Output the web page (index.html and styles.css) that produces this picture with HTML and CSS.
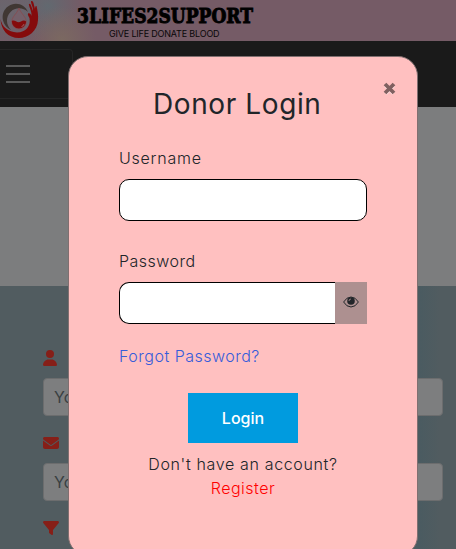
FILE: index.html
```html
<!DOCTYPE html>
<html lang="en">
<head>
<meta charset="utf-8">
<title>Donor Login</title>
<link rel="stylesheet" href="styles.css">
</head>
<body>
<div class="page">
  <header class="banner">
    <svg class="logo" width="40" height="41" viewBox="0 0 40 41">
      <path d="M11 30C1 25 0 12 8 6.500C15 1 25 4 28 12C23 7 15 7 10.500 12C5.500 17 6 25 11 30Z" fill="#403733"/>
      <path d="M.5 19C2 27 8 32 17 32.500C26 32.500 31 26 29.500 18C28.500 16 27.500 15 28 13.500C29.500 12.500 31 14 31.500 16C32 12 29.500 8 28.800 4.500C29.500 3 30.500 4 31 5.500L33 11C33.500 8 31 4 31 1.500C32 .5 33 1.500 33.500 3L35 9C35 7 35.500 5.500 36.500 6C37.500 10 38.500 15 38 20C37.500 31 28 38 19 38C8 38 1 30 .5 19Z" fill="#850b0c"/>
      <path d="M19 8C17 14 11.800 16.500 11.800 22A7.200 7 0 0 0 26.200 22C26.200 16.500 21 14 19 8Z" fill="#75606a" stroke="#914347" stroke-width=".6"/>
      <path d="M11.800 21C15 19 17 24 21 21.500Q24 19.500 26.200 21.500A7.200 7.200 0 0 1 11.800 21Z" fill="#850b0c"/>
      <path d="M21.500 26.500Q23.800 26 24 24" fill="none" stroke="#a97a7c" stroke-width=".7"/>
    </svg>
    <div class="brand">
      <svg class="wordmark" width="188" height="28" viewBox="0 0 188 28">
        <text class="wordmark-text" x="1" y="22.5" textLength="176" lengthAdjust="spacingAndGlyphs">3LIFES2SUPPORT</text>
      </svg>
      <div class="tagline">GIVE LIFE DONATE BLOOD</div>
    </div>
  </header>
  <nav class="navbar">
    <div class="toggler"><span></span><span></span><span></span></div>
  </nav>
  <section class="hero"></section>
  <section class="search">
    <svg class="icon" width="14" height="16" viewBox="0 0 448 512"><path d="M224 256a128 128 0 1 0 0-256 128 128 0 1 0 0 256zm-46 48C80 304 0 384 0 482c0 17 13 30 30 30h388c17 0 30-13 30-30 0-98-80-178-178-178z"/></svg>
    <div class="field">Your Name</div>
    <svg class="icon" width="16" height="16" viewBox="0 0 512 512"><path d="M48 64C22 64 0 86 0 112c0 15 7 29 19 38l218 164c11 8 27 8 38 0l218-164c12-9 19-23 19-38 0-26-22-48-48-48zM0 176v208c0 35 29 64 64 64h384c35 0 64-29 64-64V176L294 339c-23 18-53 18-76 0z"/></svg>
    <div class="field">Your Email</div>
    <svg class="icon" width="16" height="16" viewBox="0 0 512 512"><path d="M4 55C9 42 22 32 40 32h432c18 0 31 10 36 23s3 27-6 38L320 321v127c0 12-7 23-18 29s-24 4-33-3l-64-48c-8-6-13-16-13-26v-79L9 93C0 82-2 68 4 55z"/></svg>
  </section>
</div>

<div class="modal" role="dialog">
  <div class="close">
    <svg width="13" height="13" viewBox="0 0 13 13"><path class="close-shade" d="M2.5 3.5L10.5 11.5M10.5 3.5L2.5 11.5"/><path class="close-mark" d="M2 2L11 11M11 2L2 11"/></svg>
  </div>
  <h1 class="title"><span>Donor Login</span></h1>
  <label class="label username">Username</label>
  <div class="input"></div>
  <label class="label password">Password</label>
  <div class="group">
    <div class="input joined"></div>
    <div class="eye">
      <svg width="16" height="12" viewBox="0 0 16 12"><path d="M.6 6Q3.6 1 8 1T15.4 6Q12.4 11 8 11T.6 6Z" fill="none" stroke="#212529" stroke-width="1"/><circle cx="8" cy="5" r="3.8" fill="#212529"/><path d="M6 5Q6 3 8 3" fill="none" stroke="#ad9090" stroke-width=".8"/></svg>
    </div>
  </div>
  <a class="forgot">Forgot Password?</a>
  <button class="login">Login</button>
  <div class="signup"><div class="question">Don't have an account?</div><a class="register">Register</a></div>
</div>
</body>
</html>
```
FILE: styles.css
```css
* { box-sizing: border-box; }

body {
  margin: 0;
  height: 549px;
  overflow: hidden;
  position: relative;
  font-family: Inter, "Open Sans", sans-serif;
  font-size: 16px;
  line-height: 24px;
  color: #212529;
}

.page { height: 549px; overflow: hidden; }

.banner {
  height: 41px;
  display: flex;
  background:
    radial-gradient(circle at 62px 40px, #7b6961 0, transparent 34px),
    radial-gradient(circle at 48px 6px, #626970 0, transparent 34px),
    radial-gradient(circle at 5px 10px, #69666e 0, transparent 45px),
    #755b66;
}
.logo { flex: none; }
.brand { width: 188px; margin-left: 36px; }
.wordmark { display: block; overflow: visible; }
.wordmark-text {
  font: bold 21px "DejaVu Serif", serif;
  fill: #000;
  stroke: #000;
  stroke-width: 1px;
}
.tagline {
  margin-left: 33px;
  font-size: 9px;
  line-height: 12px;
  letter-spacing: -.18px;
  color: #090708;
  white-space: nowrap;
}

.navbar { height: 66px; padding-top: 8px; background: #1a1a1a; }
.toggler {
  width: 73px;
  height: 50px;
  padding: 15px 0 0 6px;
  border: 1px solid #252525;
  border-left: 0;
  border-radius: 0 4px 4px 0;
}
.toggler span {
  display: block;
  width: 24px;
  height: 2px;
  margin-bottom: 6px;
  background: #5a5a5a;
}

.hero { height: 179px; background: #7c7d7e; }

.search {
  height: 263px;
  padding: 64px 13px 0 43px;
  background: linear-gradient(90deg, #515c60 0 410px, #4a5b61 418px, #515c60 440px);
}
.icon { display: block; fill: #861f18; }
.field {
  height: 38px;
  margin: 12px 0 19px;
  padding: 6px 10px;
  border: 1px solid #6c6d6e;
  border-radius: 4px;
  background: #7d7e7f;
  color: #393e42;
}

.modal {
  position: absolute;
  top: 56px;
  left: 68px;
  width: 350px;
  height: 500px;
  padding: 0 50px;
  border: 1px solid #806f70;
  border-radius: 20px;
  background: #ffc0c0;
}
.close { height: 29px; margin-right: -29px; padding-top: 25px; text-align: right; line-height: 0; }
.close path { fill: none; stroke-width: 3.8; }
.close .close-mark { stroke: #806060; }
.close .close-shade { stroke: #ffe4e4; }

.title {
  height: 34px;
  margin: 0;
  padding-left: 34px;
  font-size: 28px;
  font-weight: 400;
  line-height: 36px;
  letter-spacing: .6px;
  white-space: nowrap;
}
.label { display: block; font-weight: 300; }
.username { margin-top: 26px; letter-spacing: .75px; }
.password { margin-top: 28px; letter-spacing: .5px; }
.input {
  width: 248px;
  height: 42px;
  margin-top: 9px;
  border: 1px solid #000;
  border-radius: 10px;
  background: #fff;
}
.group { display: flex; width: 248px; margin-top: 9px; }
.joined { width: 216px; margin-top: 0; border-right: 0; border-radius: 10px 0 0 10px; }
.eye {
  width: 32px;
  height: 42px;
  display: flex;
  align-items: center;
  justify-content: center;
  padding-bottom: 2px;
  background: #ad9090;
}
.forgot { display: block; margin-top: 20px; font-weight: 300; color: #365cda; letter-spacing: .5px; }
.login {
  display: block;
  width: 110px;
  height: 50px;
  margin: 25px auto 0;
  padding: 0;
  border: 0;
  background: #009bdf;
  color: #fff;
  font: 500 16px Inter, sans-serif;
}
.signup { margin-top: 9px; text-align: center; font-weight: 300; white-space: nowrap; }
.question { letter-spacing: .65px; }
.register { color: #f00; letter-spacing: .5px; }
```
